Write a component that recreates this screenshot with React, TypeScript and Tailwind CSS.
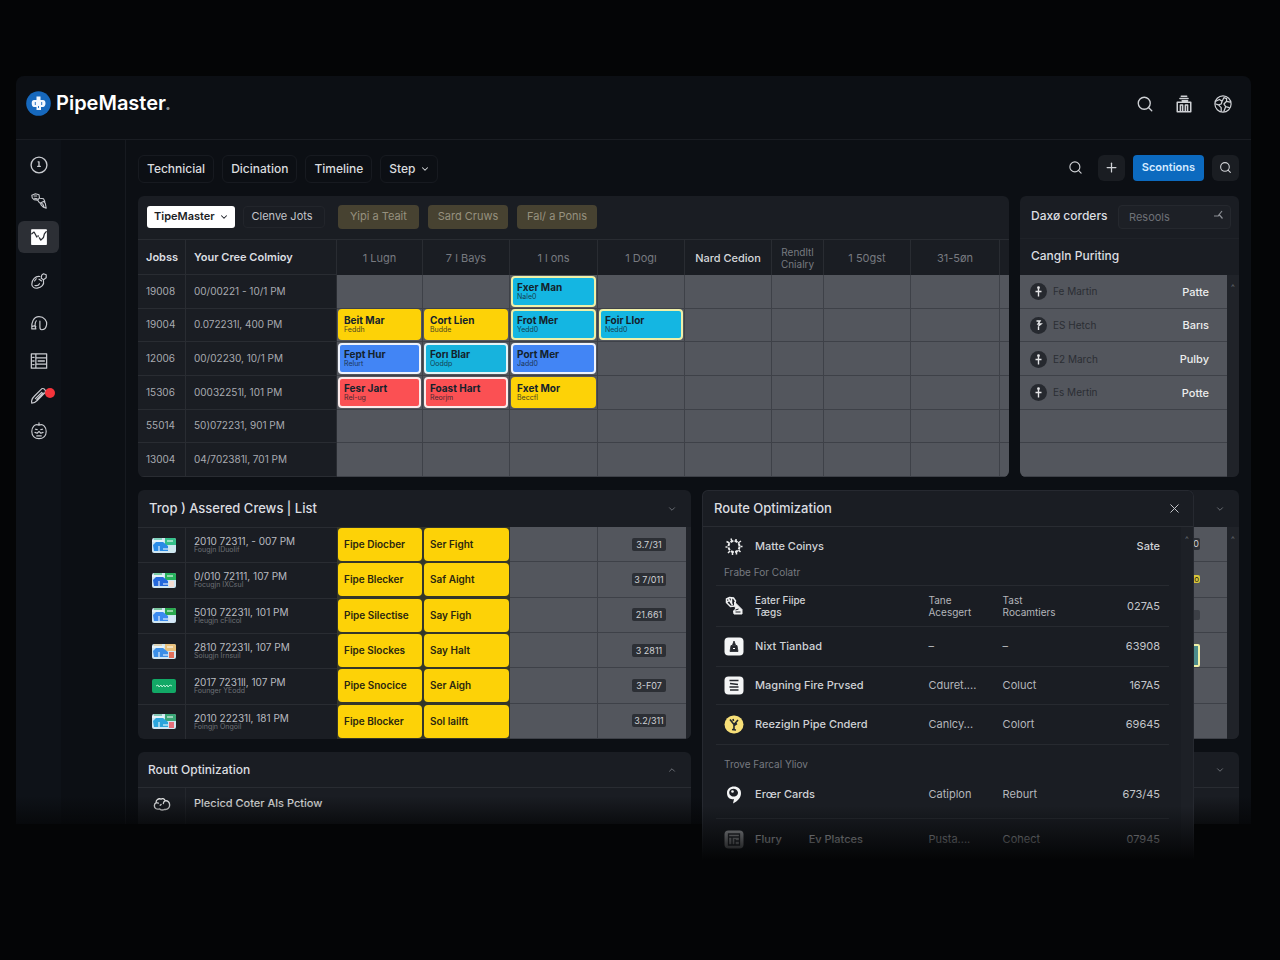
import { ReactNode } from "react";
import clsx from "clsx";
import { ChevronDown, ChevronUp, Plus, Search, X } from "lucide-react";

type Tone = "yellow" | "cyan" | "cyanGlow" | "blue" | "red";
type Job = { title: string; note: string; tone: Tone };
type Row = { id: string; date: string; jobs: (Job | null)[] };

const job = (title: string, note: string, tone: Tone): Job => ({ title, note, tone });

const toneClass: Record<Tone, string> = {
  yellow: "border-[#fdd207] bg-[#fdd207]",
  cyan: "border-[#e4f4f6] bg-[#17b3dd]",
  cyanGlow: "border-[#eff0a8] bg-[#14b6e2]",
  blue: "border-[#eef2fb] bg-[#4285f5]",
  red: "border-[#fbeaea] bg-[#fb5053]",
};

const rows: Row[] = [
  {
    id: "19008",
    date: "00/00221 - 10/1 PM",
    jobs: [null, null, job("Fxer Man", "Nale0", "cyanGlow"), null],
  },
  {
    id: "19004",
    date: "0.072231l, 400 PM",
    jobs: [
      job("Beit Mar", "Feddh", "yellow"),
      job("Cort Lien", "Budde", "yellow"),
      job("Frot Mer", "Yedd0", "cyanGlow"),
      job("Foir Llor", "Nedd0", "cyanGlow"),
    ],
  },
  {
    id: "12006",
    date: "00/02230, 10/1 PM",
    jobs: [
      job("Fept Hur", "Relurt", "blue"),
      job("Forı Blar", "Ooddp", "cyan"),
      job("Port Mer", "Jadd0", "blue"),
      null,
    ],
  },
  {
    id: "15306",
    date: "00032251l, 101 PM",
    jobs: [
      job("Fesr Jart", "Rel-ug", "red"),
      job("Foast Hart", "Reorjm", "red"),
      job("Fxet Mor", "Beccfl", "yellow"),
      null,
    ],
  },
  { id: "55014", date: "50)072231, 901 PM", jobs: [] },
  { id: "13004", date: "04/702381l, 701 PM", jobs: [] },
];

const columns = ["1 Lugn", "7 l Bays", "1 l ons", "1 Dogı", "Nard Cedion", "Rendltl Cnialry", "1 50gst", "31-5øn"];

const crews = [
  { date: "2010 72311, - 007 PM", note: "Fougjn IDuolif", pipe: "Fipe Diocber", sar: "Ser Fight", code: "3.7/31" },
  { date: "0/010 72111, 107 PM", note: "Focugjn IXCsul", pipe: "Fipe Blecker", sar: "Saf Aight", code: "3 7/011" },
  { date: "5010 72231l, 101 PM", note: "Fleugjn cFlicol", pipe: "Pipe Silectise", sar: "Say Figh", code: "21.661" },
  { date: "2810 72231l, 107 PM", note: "Soiugjn Irnsuil", pipe: "Fipe Slockes", sar: "Say Halt", code: "3 2811" },
  { date: "2017 7231ll, 107 PM", note: "Founger YEodd", pipe: "Pipe Snocice", sar: "Ser Aigh", code: "3-F07" },
  { date: "2010 22231l, 181 PM", note: "Foingjn Ongöil", pipe: "Fipe Blocker", sar: "Sol lailft", code: "3.2/311" },
];

const people = [
  { name: "Fe Martin", value: "Patte" },
  { name: "ES Hetch", value: "Barıs" },
  { name: "E2 March", value: "Pulby" },
  { name: "Es Mertin", value: "Potte" },
  null,
  null,
];

const Glyph = ({ children, size = 18 }: { children: ReactNode; size?: number }) => (
  <svg
    width={size}
    height={size}
    viewBox="0 0 20 20"
    fill="none"
    stroke="currentColor"
    strokeWidth="1.5"
    strokeLinecap="round"
    strokeLinejoin="round"
    aria-hidden="true"
    className="shrink-0"
  >
    {children}
  </svg>
);

const Logo = () => (
  <svg width="25" height="25" viewBox="0 0 25 25" aria-hidden="true">
    <circle cx="12.5" cy="12.5" r="12.3" fill="#1668bd" />
    <path
      d="M10.500 5.500h4v3.500h2.500c1.400 0 2.500 1 2.500 3.200s-1.100 3.800-2.500 3.800h-2v3h-4.500v-3H8c-1.400 0-2.300-1.500-2.300-3.700S6.600 9 8 9h2.500z"
      fill="#f2f8ff"
    />
    <path d="M9.300 11v3M15.700 11v3M12.500 15v2" stroke="#1668bd" strokeWidth=".9" />
  </svg>
);

const navItems = [
  {
    label: "Clock",
    gap: "",
    icon: (
      <Glyph>
        <circle cx="10" cy="10" r="8.8" />
        <path d="M9 6.5h1V11M8.5 11.5h3" />
      </Glyph>
    ),
  },
  {
    label: "Tools",
    gap: "mt-1",
    icon: (
      <Glyph>
        <path
          d="M2 3.500l4-1.500 4 1 .5 3.500-2 2.500-4-.5-2-2zM4.500 4.500h3M5 7l3 .5M8.500 9l2 3 2.500 1M11 7l4 .5 1.500 3M12 12l3-1.500 2 2 1 5.500-3-1-3-3zM14 13l1.500 3"
          strokeWidth="1.2"
        />
      </Glyph>
    ),
  },
  {
    label: "Schedule",
    gap: "mt-1",
    active: true,
    icon: (
      <Glyph>
        <path d="M2 2h16v16H2z" fill="#fff" stroke="#fff" />
        <path d="M2 6.500l2.500-2 2 3.500 1 2M10.500 11l1.500 2.500 3-3 1-4L18 4M9 8.500v1" stroke="#2a2d33" strokeWidth="1.4" />
      </Glyph>
    ),
  },
  {
    label: "Fuel",
    gap: "mt-3",
    icon: (
      <Glyph>
        <path
          d="M11 5C6 4 2 9 2 13.500c0 3 3 5 6 4.500 5-.5 8-4 7-8.500M13 3.500l2-1.500 3 1v3.500l-3 2-2.500-1.500zM5 10l2-2.500M5.500 15c2 .5 4 0 5-2M10 8l3 2"
          strokeWidth="1.3"
        />
      </Glyph>
    ),
  },
  {
    label: "Areas",
    gap: "mt-2.5",
    icon: (
      <Glyph>
        <path
          d="M6.500 16.500l-4.500 0c-1-7 2-13.500 8-13.500s9 5 8.500 8.500c-.5 4-3 6-5.500 6-1.500 0-2-1-2-3V8M7 7.500c-1.500 2-1.500 6-.5 9M2.500 14c1.500-1 3-1 4 0"
          strokeWidth="1.3"
        />
      </Glyph>
    ),
  },
  {
    label: "Lists",
    gap: "mt-1.5",
    icon: (
      <Glyph>
        <path d="M1.500 2h17v16h-17zM6.500 2v16M6.500 6.500h12M9 10h7M6.500 13.500h12M3 6h1.500M3 10h1.500M3 14h1.500" strokeWidth="1.4" />
      </Glyph>
    ),
  },
  {
    label: "Edit",
    gap: "mt-[3px]",
    badge: true,
    icon: (
      <Glyph>
        <path d="M2 18c-1-3 0-5 3-8l8-8c2-1 5 1 4 4l-9 9c-2 2-4 3-6 3zM6 13l7-7M7.500 14l7-7.500" strokeWidth="1.3" />
      </Glyph>
    ),
  },
  {
    label: "Support",
    gap: "mt-[3px]",
    icon: (
      <Glyph>
        <path
          d="M10 3.500C5 1.500 2 6 2 10.500 2 15.500 5.500 18.500 10 18.500s8-3 8-8c0-4.500-3-9-8-7zM10 3.500V1M6 8l2 .5M12 8.500L14 8M5.500 11.500l2.500 1 2-2 2 2 2.500-1M7.500 15.500h5"
          strokeWidth="1.3"
        />
      </Glyph>
    ),
  },
];

const Sidebar = () => (
  <nav className="w-[45px] shrink-0 bg-[#0e1218] pt-[9px] text-[#c9cbd0]">
    {navItems.map((item) => (
      <button
        key={item.label}
        aria-label={item.label}
        className={clsx(
          "relative mx-auto flex h-8 w-[41px] items-center justify-center rounded-md",
          item.gap,
          item.active && "bg-[#2c2f35]"
        )}
      >
        {item.icon}
        {item.badge && <span className="absolute top-2 right-1 size-2.5 rounded-full bg-[#f5343b]" />}
      </button>
    ))}
  </nav>
);

const Header = () => (
  <header className="flex h-16 items-start justify-between border-b border-[#1a1d23] pt-3.5 pr-[19px] pl-2.5">
    <div className="flex items-center gap-[5px]">
      <Logo />
      <h1 className="text-[20px] leading-[26px] font-semibold text-white">
        PipeMaster<span className="text-[#8b8e94]">.</span>
      </h1>
    </div>
    <div className="flex items-center gap-[21px] pt-[5px] text-[#cfd1d5]">
      <button aria-label="Search">
        <Search size={18} strokeWidth={1.8} />
      </button>
      <button aria-label="Company">
        <Glyph>
          <path d="M7 1.500h6M5.500 4h9M8 6.500h6M2.500 18.500V8h15v10.500zM6 18v-7h2.500v7M11.500 18v-7H14v7" strokeWidth="1.7" />
        </Glyph>
      </button>
      <button aria-label="Region">
        <Glyph>
          <circle cx="10" cy="10" r="9" strokeWidth="1.3" />
          <path d="M2 7l4-2 3 2-1 3-3 1-3-1M9 7l2-4M11 3l3 1v3l4 1M14 7l-3 3 2 3 4 1M5 11l3 3v4M13 13l-2 5" strokeWidth="1.4" />
        </Glyph>
      </button>
    </div>
  </header>
);

const Toolbar = () => (
  <div className="flex items-center justify-between">
    <div className="flex items-center gap-2 pt-px text-[12px] font-medium text-[#d9dbde]">
      {["Technicial", "Dicination", "Timeline"].map((label) => (
        <button key={label} className="h-7 rounded-md border border-[#171a20] px-2">
          {label}
        </button>
      ))}
      <div className="relative">
        <select aria-label="Step" className="h-7 w-[58px] appearance-none rounded-md border border-[#171a20] bg-transparent pl-2">
          <option>Step</option>
        </select>
        <ChevronDown size={10} strokeWidth={2.5} className="pointer-events-none absolute top-[9px] right-2" />
      </div>
    </div>
    <div className="flex items-center pb-0.5 text-[#d0d2d6]">
      <button aria-label="Find" className="mr-[15px]">
        <Search size={15} strokeWidth={1.8} />
      </button>
      <button aria-label="Add" className="mr-2 flex h-[26px] w-[27px] items-center justify-center rounded-md bg-[#1a1d22]">
        <Plus size={15} />
      </button>
      <button className="mr-2 h-[26px] rounded-[4px] bg-[#0c6abf] px-[9px] text-[11px] font-semibold text-[#d5ebff]">
        Scontions
      </button>
      <button aria-label="Search jobs" className="flex h-[26px] w-[27px] items-center justify-center rounded-md bg-[#1a1d22]">
        <Search size={13} />
      </button>
    </div>
  </div>
);

const JobCard = ({ title, note, tone }: Job) => (
  <div
    className={clsx(
      "mx-px flex h-[31px] flex-col justify-center overflow-hidden rounded-[4px] border-2 px-1 whitespace-nowrap text-[#14222c]",
      toneClass[tone]
    )}
  >
    <span className="text-[10px] leading-[11px] font-bold">{title}</span>
    <span className="text-[7px] leading-2 opacity-80">{note}</span>
  </div>
);

const line = "border-r border-b border-[#292c32]";
const grayCell = "border-r border-b border-[#3e4148] bg-[#53565d] p-0";

const SchedulePanel = () => (
  <section className="min-w-0 flex-[871] overflow-hidden rounded-md bg-[#1a1d23]">
    <div className="flex h-[43px] items-center pb-0.5 pl-[9px] text-[11px]">
      <div className="relative">
        <select
          aria-label="Workspace"
          className="h-[22px] w-[88px] appearance-none rounded-[3px] bg-white pl-[7px] text-[11px] font-semibold text-[#1a1d23]"
        >
          <option>TipeMaster</option>
        </select>
        <ChevronDown size={10} strokeWidth={2.5} className="pointer-events-none absolute top-1.5 right-1.5 text-[#1a1d23]" />
      </div>
      <button className="ml-2 h-[22px] w-[82px] rounded-[4px] border border-[#22252b] pr-1 text-[#c3c5ca]">Clenve Jots</button>
      <div className="ml-[13px] flex gap-[9px] text-[#96917f]">
        <button className="h-6 w-[81px] rounded-[4px] bg-[#474231]">Yipi a Teait</button>
        <button className="h-6 w-20 rounded-[4px] bg-[#474231]">Sard Cruws</button>
        <button className="h-6 w-20 rounded-[4px] bg-[#474231]">Fal/ a Ponıs</button>
      </div>
    </div>
    <table className="h-[238px] w-full table-fixed border-separate border-spacing-0">
      <colgroup>
        <col className="w-12" />
        <col className="w-[151px]" />
        <col className="w-[86px]" />
        <col className="w-[87px]" />
        <col className="w-[88px]" />
        <col className="w-[87px]" />
        <col className="w-[87px]" />
        <col className="w-[52px]" />
        <col className="w-[87px]" />
        <col className="w-[89px]" />
        <col className="w-[9px]" />
      </colgroup>
      <thead>
        <tr className="h-9 text-[11px]">
          <th className="border-t border-r border-b border-[#292c32] pl-2 text-left font-semibold text-[#dcdee1]">Jobss</th>
          <th className="border-t border-r border-b border-[#292c32] pl-2 text-left font-semibold text-[#dcdee1]">Your Cree Colmioy</th>
          {columns.map((name, i) => (
            <th
              key={name}
              className={clsx(
                "border-t border-r border-[#292c32] px-1.5 leading-3",
                i === 4 ? "font-medium text-[#d5d7da]" : "font-normal text-[#777a80]",
                i === 5 && "text-[10px]"
              )}
            >
              {name}
            </th>
          ))}
          <th className="border-t border-[#292c32]" />
        </tr>
      </thead>
      <tbody>
        {rows.map((row) => (
          <tr key={row.id} className="h-[33px]">
            <td className={clsx(line, "py-0 pl-2 text-[10px] text-[#a8aab0]")}>{row.id}</td>
            <td className={clsx(line, "py-0 pl-2 text-[10px] text-[#a8aab0]")}>{row.date}</td>
            {columns.map((name, i) => {
              const item = row.jobs[i];
              return (
                <td key={name} className={grayCell}>
                  {item && <JobCard {...item} />}
                </td>
              );
            })}
            <td className="border-b border-[#3e4148] bg-[#53565d]" />
          </tr>
        ))}
      </tbody>
    </table>
  </section>
);

const OrdersPanel = () => (
  <section className="flex min-w-0 flex-[219] flex-col overflow-hidden rounded-md bg-[#1a1d23]">
    <div className="flex h-[43px] items-center justify-between border-b border-[#1f2228] pr-2 pb-0.5 pl-[11px]">
      <label htmlFor="orders" className="text-[12px] font-medium whitespace-nowrap text-[#dcdee1]">
        Daxø corders
      </label>
      <div className="relative">
        <input
          id="orders"
          placeholder="Resools"
          className="h-6 w-[113px] rounded-[4px] border border-[#25282e] bg-[#1d2026] pl-2.5 text-[11px] placeholder:text-[#6e7177]"
        />
        <svg width="12" height="12" viewBox="0 0 12 12" className="pointer-events-none absolute top-1.5 right-1.5" aria-hidden="true">
          <path d="M1 7h4l4-5M6.500 6l3 3.500M5 7l1.500-1" fill="none" stroke="#8b8e94" strokeWidth="1.2" />
        </svg>
      </div>
    </div>
    <h2 className="flex h-9 items-center pb-0.5 pl-[11px] text-[12px] font-medium text-[#dcdee1]">Cangln Puriting</h2>
    <div className="flex flex-1">
      <ul className="grid flex-1 grid-rows-6 bg-[#53565d]">
        {people.map((person, i) => (
          <li key={i} className="flex items-center border-b border-[#3e4148] pt-px pr-[18px] pl-2.5 text-[11px]">
            {person && (
              <>
                <svg width="17" height="17" viewBox="0 0 17 17" aria-hidden="true">
                  <circle cx="8.5" cy="8.5" r="8.5" fill="#26292f" />
                  <path
                    d={i === 1 ? "M6.500 4h3.500l-2 3h3l-3 2.500M8.500 10v3" : "M8.500 6v7.500M5.500 8.500h6"}
                    fill="none"
                    stroke="#e5e6e8"
                    strokeWidth="1.4"
                  />
                  {i !== 1 && <circle cx="8.5" cy="4.7" r="1.4" fill="#e5e6e8" />}
                </svg>
                <span className="ml-1.5 text-[10px] text-[#2b2e34]">{person.name}</span>
                <span className="ml-auto font-medium text-[#eceded]">{person.value}</span>
              </>
            )}
          </li>
        ))}
      </ul>
      <div className="w-3 bg-[#202329] pt-2 text-center text-[8px] leading-2 text-[#6e7177]">^</div>
    </div>
  </section>
);

const thumbs = [
  ["#35c08a", "#2b8be6", "#cfe9ee"],
  ["#27b35d", "#2468dc", "#f3dcd2"],
  ["#2aa84e", "#3c8af0", "#d7e8fa"],
  ["#e8c07c", "#3b8fe8", "#e2705c"],
  ["", "", ""],
  ["#3aa676", "#2ba5dc", "#e66f7b"],
];

const Thumb = ({ index }: { index: number }) => {
  const [a, b, c] = thumbs[index];
  if (!a)
    return (
      <svg width="24" height="14" viewBox="0 0 24 14" aria-hidden="true">
        <rect width="24" height="14" rx="2" fill="#12a866" />
        <path d="M4 7l2-1 1 2 2-2 1 2 2-2 1 2 2-2 1 2 2-2 2 1" fill="none" stroke="#b9ecd2" />
      </svg>
    );
  return (
    <svg width="24" height="15" viewBox="0 0 24 15" aria-hidden="true">
      <rect width="24" height="15" rx="2" fill="#cfe6f2" />
      <path d="M13 0h9a2 2 0 012 2v5H13z" fill={a} />
      <path d="M1 7l3-3h7l5 4v5H2z" fill={b} />
      <path d="M17 8h5v6h-5z" fill={c} />
      <path d="M0 3h12M15 3h6M7 8v5M11 11h5" stroke="#fff" />
      <path d="M2 1h8" stroke={a} />
    </svg>
  );
};

const CrewsPanel = () => (
  <section className="overflow-hidden rounded-md bg-[#1a1d23]">
    <div className="flex h-[37px] items-center justify-between pr-3.5 pl-[11px]">
      <h2 className="text-[13px] font-medium text-[#dcdee1]">Trop ) Assered Crews | List</h2>
      <button aria-label="Collapse crews">
        <ChevronDown size={10} className="text-[#7a7d83]" />
      </button>
    </div>
    <div className="flex">
      <table className="h-[212px] flex-1 table-fixed border-separate border-spacing-0">
        <colgroup>
          <col className="w-12" />
          <col className="w-[151px]" />
          <col className="w-[86px]" />
          <col className="w-[87px]" />
          <col className="w-[88px]" />
          <col className="w-[88px]" />
        </colgroup>
        <tbody>
          {crews.map((crew, i) => (
            <tr key={crew.date}>
              <td className="border-t border-r border-[#292c32] p-0 pl-[14px]">
                <Thumb index={i} />
              </td>
              <td className="border-t border-[#292c32] py-0 pl-2 text-[#b9bbc0]">
                <div className="text-[10px] leading-[10px]">{crew.date}</div>
                <div className="text-[7px] leading-2 text-[#6e7177]">{crew.note}</div>
              </td>
              {[crew.pipe, crew.sar].map((text) => (
                <td key={text} className="bg-[#34362a] p-0">
                  <div className="mx-px flex h-[33px] items-center rounded-[4px] bg-[#fdd207] pl-1.5 text-[10px] font-semibold whitespace-nowrap text-[#2b2710]">
                    {text}
                  </div>
                </td>
              ))}
              <td className={grayCell} />
              <td className="border-b border-[#3e4148] bg-[#53565d] p-0 pr-5">
                <span className="ml-auto block h-[13px] w-[34px] rounded-[2px] bg-[#2c2f35] text-center text-[9px] leading-[13px] text-[#d0d2d6]">
                  {crew.code}
                </span>
              </td>
            </tr>
          ))}
        </tbody>
      </table>
      <div className="w-[5px] bg-[#202329]" />
    </div>
  </section>
);

const RoutePanel = () => (
  <section className="overflow-hidden rounded-t-md bg-[#1a1d23]">
    <div className="flex h-9 items-center justify-between border-b border-[#292c32] pr-3.5 pl-2.5">
      <h2 className="text-[12px] font-medium text-[#dcdee1]">Routt Optinization</h2>
      <button aria-label="Expand route">
        <ChevronUp size={10} className="text-[#7a7d83]" />
      </button>
    </div>
    <div className="flex h-9">
      <div className="flex w-12 items-center justify-center border-r border-[#24272d] pb-1 text-[#f4f5f6]">
        <Glyph>
          <path d="M3.500 8.500C3 5.500 6 3.500 9 4.500c2-1 4 0 4.500 2 3-.5 5 1.500 5 4.500s-2 5.500-5.500 5c-2 1-4 1-5.500-.5-4 1-6-1-6-3.500 0-1.500 1-3 2-3.500zM3.500 8.500L6 9M13.500 6.500c-1.500.5-2 1.500-2 3M8 11.500l1-1" />
        </Glyph>
      </div>
      <p className="pt-[7px] pl-2 text-[11px] font-medium text-[#eceded]">Plecicd Coter Als Pctiow</p>
    </div>
  </section>
);

const TotalsPanel = () => (
  <section className="overflow-hidden rounded-md bg-[#1a1d23]">
    <div className="flex h-[37px] items-center justify-end pr-3.5">
      <button aria-label="Collapse totals">
        <ChevronDown size={10} className="text-[#7a7d83]" />
      </button>
    </div>
    <div className="flex h-[212px]">
      <ul className="grid flex-1 grid-rows-6 bg-[#53565d]">
        {[0, 1, 2, 3, 4, 5].map((i) => (
          <li key={i} className="flex items-center justify-end border-b border-[#3e4148] pr-[27px]">
            {i === 0 && <span className="h-3 w-7 rounded-[2px] bg-[#2c2f35] pr-px text-right text-[9px] leading-3 text-[#d0d2d6]">0</span>}
            {i === 1 && <span className="h-2 w-7 rounded-[2px] bg-[#d8c53a] pr-px text-right text-[8px] leading-2 text-[#2b2710]">o</span>}
            {i === 2 && <span className="h-2.5 w-7 rounded-[2px] bg-[#3c3f46]" />}
            {i === 3 && <span className="mt-2.5 h-[23px] w-20 rounded-[2px] border-2 border-[#eff0a8] bg-[#4c8c8c]" />}
          </li>
        ))}
      </ul>
      <div className="w-3 bg-[#202329] pt-2 text-center text-[8px] leading-2 text-[#6e7177]">^</div>
    </div>
  </section>
);

const SummaryPanel = () => (
  <section className="flex-1 rounded-t-md bg-[#1a1d23]">
    <div className="flex h-9 items-center justify-end border-b border-[#292c32] pr-3.5">
      <button aria-label="Collapse summary">
        <ChevronDown size={10} className="text-[#7a7d83]" />
      </button>
    </div>
  </section>
);

const Tile = ({ fill = "#f4f5f6", round, children }: { fill?: string; round?: boolean; children: ReactNode }) => (
  <svg width="20" height="19" viewBox="0 0 20 19" fill="none" aria-hidden="true">
    <rect x=".5" y=".5" width="19" height="18" rx={round ? 9 : 4} fill={fill} />
    {children}
  </svg>
);

type Route = { icon: ReactNode; name: ReactNode; first: ReactNode; second: ReactNode; total: string; height: string };

const TwoLines = ({ top, bottom }: { top: string; bottom: string }) => (
  <div className="text-[10px] leading-3">
    <div>{top}</div>
    <div>{bottom}</div>
  </div>
);

const pipeRoutes: Route[] = [
  {
    icon: (
      <svg width="20" height="20" viewBox="0 0 19 20" fill="none" stroke="#f0f1f2" aria-hidden="true">
        <path d="M2 3l3-1.500 4 .5 2 3-1 5-4 .5-4-4zM4 3l4 6M7 2v5M2.500 6l3-2" strokeWidth="1.5" />
        <path d="M10 6l4 4 3.500 3.500V18H9.500l-.5-3 2-2z" fill="#f0f1f2" />
        <path d="M11 14l3-1M11 16h5" stroke="#1a1d23" />
      </svg>
    ),
    name: <TwoLines top="Eater Fiipe" bottom="Tægs" />,
    first: <TwoLines top="Tane" bottom="Acesgert" />,
    second: <TwoLines top="Tast" bottom="Rocamtiers" />,
    total: "027A5",
    height: "h-[41px]",
  },
  {
    icon: (
      <Tile>
        <path d="M6 14.500l1-6h6l1 6zM8.500 8l1.500-4L11.500 8" fill="#24272d" stroke="#24272d" strokeWidth=".8" />
        <path d="M9 11.500h2" stroke="#fff" />
      </Tile>
    ),
    name: "Nixt Tianbad",
    first: "–",
    second: "–",
    total: "63908",
    height: "h-10",
  },
  {
    icon: (
      <Tile>
        <path d="M5.500 4.500h9M6 7.500l8 1M5.500 11h9M6 14h8.500" stroke="#24272d" strokeWidth="1.4" />
      </Tile>
    ),
    name: "Magning Fire Prvsed",
    first: "Cduret....",
    second: "Coluct",
    total: "167A5",
    height: "h-[38px]",
  },
  {
    icon: (
      <Tile fill="#f7df78" round>
        <path d="M6 4.500l4 5V15M14 5l-4 4.500M9 4l.5 2M13 8.500l-3 2M8 14.500l4 .5" stroke="#24272d" strokeWidth="1.6" />
      </Tile>
    ),
    name: "Reezigln Pipe Cnderd",
    first: "Canlcy...",
    second: "Colort",
    total: "69645",
    height: "h-10",
  },
];

const parcelRoutes: Route[] = [
  {
    icon: (
      <svg width="20" height="20" viewBox="0 0 20 20" fill="none" aria-hidden="true">
        <path d="M9 18.500l1-4.500c-4 1-7-1.500-7-6C3 4 6 1.500 10 1.500s7 2.500 7 6.500c0 4.500-3 8-8 10.500z" fill="#f4f5f6" />
        <path d="M5.500 6c1.500-3.500 8-3 8.500 1.500 0 3.500-3.500 4.500-5.500 4S4.500 9 5.500 6z" fill="#1a1d23" />
        <circle cx="8.5" cy="6.5" r="1.300" fill="#f4f5f6" />
      </svg>
    ),
    name: "Erœr Cards",
    first: "Catiplon",
    second: "Reburt",
    total: "673/45",
    height: "h-12",
  },
  {
    icon: (
      <Tile fill="#a4a6aa">
        <path d="M4 7h12M4.500 4h11v11h-11zM8 7v8M11 11h4M11 9v6" stroke="#2a2d33" strokeWidth="1.3" />
      </Tile>
    ),
    name: <>Flury <span className="ml-6">Ev Platces</span></>,
    first: "Pusta....",
    second: "Cohect",
    total: "07945",
    height: "h-[42px]",
  },
];

const RouteRows = ({ items }: { items: Route[] }) => (
  <>
    {items.map((item) => (
      <tr key={item.total} className={item.height}>
        <td className="border-t border-[#272a30] p-0 pl-2">{item.icon}</td>
        <td className="border-t border-[#272a30] p-0 font-medium">{item.name}</td>
        <td className="border-t border-[#272a30] p-0 text-[#b4b6bb]">{item.first}</td>
        <td className="border-t border-[#272a30] p-0 text-[#b4b6bb]">{item.second}</td>
        <td className="border-t border-[#272a30] p-0 pr-[9px] text-right text-[#c3c5ca]">{item.total}</td>
      </tr>
    ))}
  </>
);

const RouteDialog = () => (
  <div
    role="dialog"
    aria-labelledby="route-title"
    className="absolute top-0 right-[45px] left-0 z-20 overflow-hidden rounded-t-md bg-[#1a1d23]"
  >
    <div className="rounded-t-md border border-b-0 border-[#262930]">
      <div className="flex h-9 items-center justify-between border-b border-[#292c32] px-[11px]">
        <h2 id="route-title" className="text-[13px] font-medium text-[#dcdee1]">Route Optimization</h2>
        <button aria-label="Close">
          <X size={15} strokeWidth={1.6} className="text-[#c3c5ca]" />
        </button>
      </div>
      <div className="flex">
        <div className="flex-1 pr-3 pl-[13px]">
          <table className="w-full table-fixed border-separate border-spacing-0 text-[11px] leading-[11px] text-[#d0d2d6]">
            <colgroup>
              <col className="w-[39px]" />
              <col className="w-[173px]" />
              <col className="w-[74px]" />
              <col className="w-[86px]" />
              <col className="w-[80px]" />
            </colgroup>
            <tbody>
              <tr className="h-[39px]">
                <td className="p-0 pl-2">
                  <svg width="20" height="19" viewBox="0 0 20 19" fill="none" stroke="#eceded" strokeWidth="2" aria-hidden="true">
                    <circle cx="10" cy="9.5" r="5.5" strokeDasharray="3 1.320" />
                    <path d="M7 1.500l1 3M12 2v2M2.500 4.500l3 1.500M1.500 10h2M4 16l2-2M8.500 18v-3M12.500 17.500v-3M16.500 15l-2-2M18.500 9.500h-2M17 4l-3 2" strokeWidth="1.5" />
                  </svg>
                </td>
                <td className="p-0 font-medium" colSpan={3}>Matte Coinys</td>
                <td className="p-0 pr-[9px] text-right font-medium">Sate</td>
              </tr>
              <tr className="h-[19px]">
                <td colSpan={5} className="p-0 pt-px pl-2 align-top text-[10px] text-[#777a80]">Frabe For Colatr</td>
              </tr>
              <RouteRows items={pipeRoutes} />
              <tr className="h-[26px]">
                <td colSpan={5} className="border-t border-[#272a30] p-0 pl-2 align-bottom text-[10px] text-[#777a80]">Trove Farcal Yliov</td>
              </tr>
            </tbody>
            <tbody className="[&>tr:first-child>td]:border-transparent">
              <RouteRows items={parcelRoutes} />
            </tbody>
          </table>
        </div>
        <div className="w-3 bg-[#1d2026] pt-2 text-center text-[8px] leading-2 text-[#6e7177]">^</div>
      </div>
    </div>
    <div className="pointer-events-none absolute inset-x-0 bottom-0 h-[54px] bg-gradient-to-b from-transparent to-[#040506]" />
  </div>
);

const App = () => {
  return (
    <div className="min-h-screen bg-[#040506] px-4 pt-[76px] pr-[29px] font-[Inter,'Liberation_Sans',sans-serif]">
      <div className="relative rounded-t-lg bg-[#0c0f14]">
        <Header />
        <div className="flex">
          <Sidebar />
          <div className="w-[65px] shrink-0 border-r border-[#171a20]" />
          <main className="flex min-w-0 flex-1 flex-col pt-3.5 pr-3 pl-3">
            <Toolbar />
            <div className="mt-[13px] flex gap-[11px]">
              <SchedulePanel />
              <OrdersPanel />
            </div>
            <div className="mt-[13px] flex gap-[11px]">
              <div className="flex min-w-0 flex-[553] flex-col gap-[13px]">
                <CrewsPanel />
                <RoutePanel />
              </div>
              <div className="relative flex min-w-0 flex-[537] flex-col gap-[13px]">
                <TotalsPanel />
                <SummaryPanel />
                <RouteDialog />
              </div>
            </div>
          </main>
        </div>
        <div className="pointer-events-none absolute inset-x-0 bottom-0 z-10 h-7 bg-gradient-to-b from-transparent to-[#040506]/70" />
      </div>
    </div>
  );
};

export default App;
